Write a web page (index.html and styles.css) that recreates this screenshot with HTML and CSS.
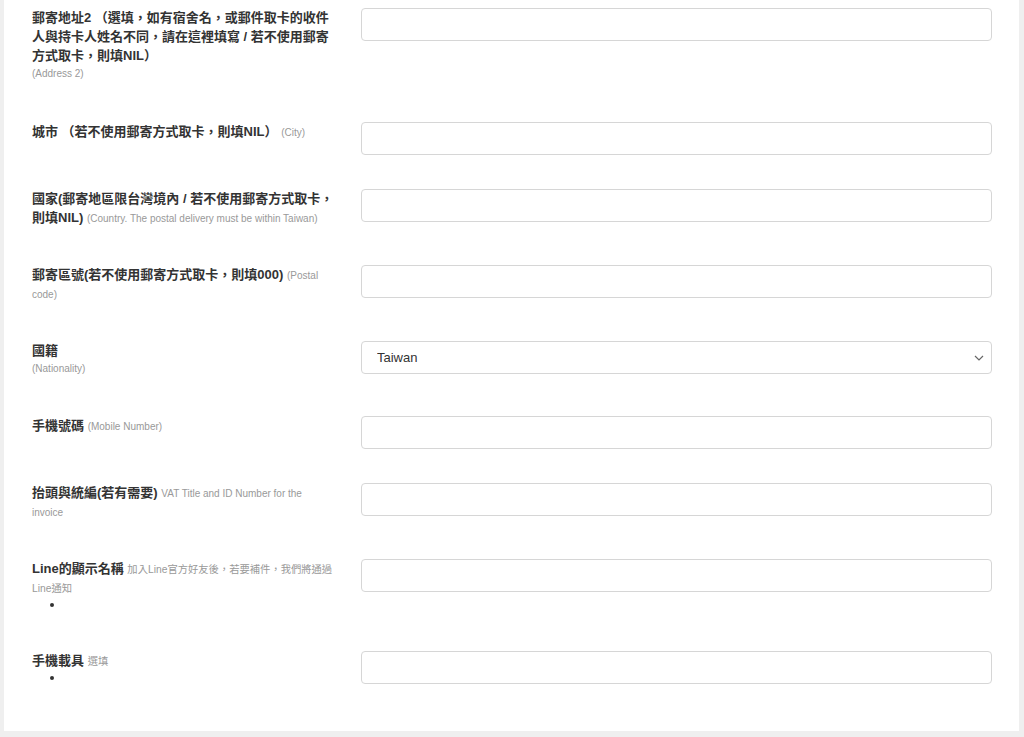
FILE: index.html
```html
<!DOCTYPE html>
<html lang="zh-Hant">
<head>
<meta charset="utf-8">
<title>Form</title>
<link rel="stylesheet" href="styles.css">
</head>
<body>
<div class="panel">
  <div class="row">
    <div class="label"><strong>郵寄地址2 （選填，如有宿舍名，或郵件取卡的收件人與持卡人姓名不同，請在這裡填寫 / 若不使用郵寄方式取卡，則填NIL）</strong><span class="help block">(Address 2)</span></div>
    <div class="field"><input class="control" type="text"></div>
  </div>
  <div class="row">
    <div class="label"><strong>城市 （若不使用郵寄方式取卡，則填NIL）</strong> <span class="help">(City)</span></div>
    <div class="field"><input class="control" type="text"></div>
  </div>
  <div class="row">
    <div class="label"><strong>國家(郵寄地區限台灣境內 / 若不使用郵寄方式取卡，則填NIL)</strong> <span class="help">(Country. The postal delivery must be within Taiwan)</span></div>
    <div class="field"><input class="control" type="text"></div>
  </div>
  <div class="row">
    <div class="label"><strong>郵寄區號(若不使用郵寄方式取卡，則填000)</strong> <span class="help">(Postal code)</span></div>
    <div class="field"><input class="control" type="text"></div>
  </div>
  <div class="row">
    <div class="label"><strong>國籍</strong><span class="help block">(Nationality)</span></div>
    <div class="field">
      <select class="control select"><option>Taiwan</option></select>
      <svg class="chevron" width="10" height="6" viewBox="0 0 10 6"><path d="M1 1 L5 5 L9 1" fill="none" stroke="#666" stroke-width="1.2"/></svg>
    </div>
  </div>
  <div class="row">
    <div class="label"><strong>手機號碼</strong> <span class="help">(Mobile Number)</span></div>
    <div class="field"><input class="control" type="text"></div>
  </div>
  <div class="row">
    <div class="label"><strong>抬頭與統編(若有需要)</strong> <span class="help">VAT Title and ID Number for the invoice</span></div>
    <div class="field"><input class="control" type="text"></div>
  </div>
  <div class="row">
    <div class="label"><strong>Line的顯示名稱</strong> <span class="help cjk">加入Line官方好友後，若要補件，我們將通過Line通知</span>
      <ul class="dots"><li></li></ul>
    </div>
    <div class="field"><input class="control" type="text"></div>
  </div>
  <div class="row">
    <div class="label"><strong>手機載具</strong> <span class="help cjk">選填</span>
      <ul class="dots"><li></li></ul>
    </div>
    <div class="field"><input class="control" type="text"></div>
  </div>
</div>
</body>
</html>
```

FILE: styles.css
```css
html, body {
  margin: 0;
  padding: 0;
}
body {
  background: #efefef;
  font-family: "Liberation Sans", "Noto Sans CJK TC", sans-serif;
  color: #333;
  width: 1024px;
  height: 737px;
  overflow: hidden;
}
.panel {
  background: #fff;
  margin-left: 4px;
  width: 1015px;
  height: 731px;
  box-sizing: border-box;
  padding: 8px 27px 0 28px;
}
.row {
  display: grid;
  grid-template-columns: 303px 631px;
  column-gap: 26px;
  align-items: start;
  margin-bottom: 34px;
}
.label {
  font-size: 13px;
  line-height: 19px;
  padding-bottom: 4px;
}
.label strong {
  font-weight: bold;
  color: #333;
}
.help {
  font-size: 10px;
  color: #999;
  font-weight: normal;
  line-height: 10px;
}
.help.cjk {
  font-size: 10.3px;
}
.help.block {
  display: block;
  line-height: 18.5px;
}
.dots {
  margin: 0;
  padding-left: 33px;
  font-size: 13px;
  line-height: 16px;
  color: #333;
}
.dots li {
  height: 16px;
}
.field {
  position: relative;
}
.control {
  display: block;
  box-sizing: border-box;
  width: 631px;
  height: 33px;
  border: 1px solid #d6d6d6;
  border-radius: 4px;
  background: #fff;
  margin: 0;
  padding: 0 15px;
  font-family: "Liberation Sans", "Noto Sans CJK TC", sans-serif;
  font-size: 13px;
  color: #333;
  outline: none;
}
.select {
  appearance: none;
  -webkit-appearance: none;
}
.chevron {
  position: absolute;
  right: 8px;
  top: 14px;
}
```
